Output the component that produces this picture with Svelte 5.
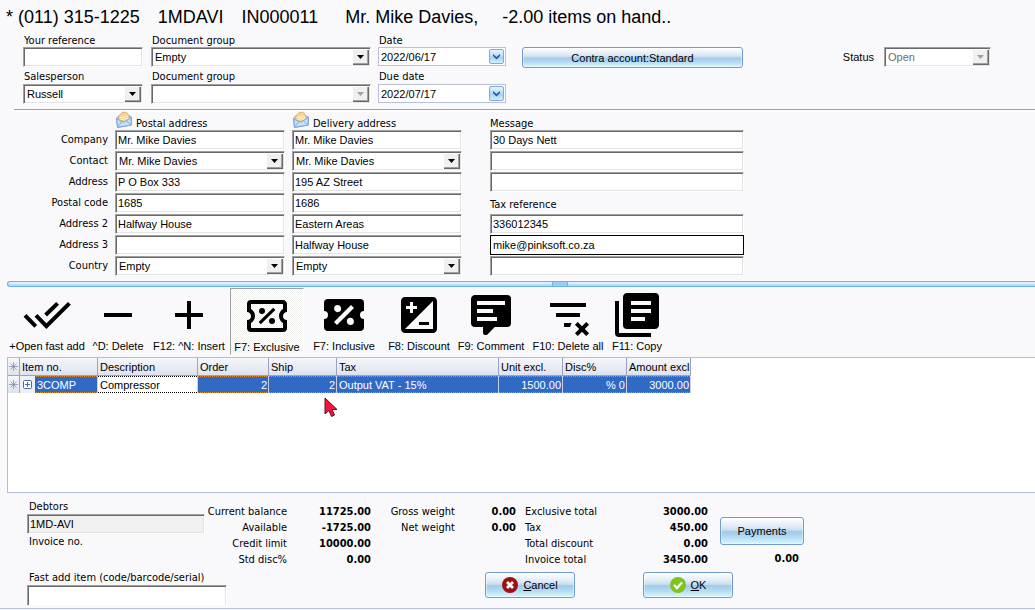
<script>
  const addressRows = [
    { label: 'Company', postal: 'Mr. Mike Davies', delivery: 'Mr. Mike Davies', third: 'Message line 1', value: '30 Days Nett' },
    { label: 'Contact', postal: 'Mr. Mike Davies', delivery: 'Mr. Mike Davies', combo: true, third: 'Message line 2', value: '' },
    { label: 'Address', postal: 'P O Box 333', delivery: '195 AZ Street', third: 'Message line 3', value: '' },
    { label: 'Postal code', postal: '1685', delivery: '1686', heading: 'Tax reference' },
    { label: 'Address 2', postal: 'Halfway House', delivery: 'Eastern Areas', id: 'taxref', third: 'Tax reference', value: '336012345' },
    { label: 'Address 3', postal: '', delivery: 'Halfway House', third: 'E-mail', value: 'mike@pinksoft.co.za', flat: true },
    { label: 'Country', postal: 'Empty', delivery: 'Empty', combo: true, third: 'Extra', value: '' }
  ];

  const tools = [
    { label: '+Open fast add', line: 'M6.5 12.2 11.7 17.6 23.2 6.2M1 12.2 6.4 17.7M11.3 12 17.3 6.2' },
    { label: '^D: Delete', line: 'M5 12H19' },
    { label: 'F12: ^N: Insert', line: 'M5 12H19M12 5V19' },
    { label: 'F7: Exclusive', pressed: true, fill: 'M4 4A2 2 0 0 0 2 6V10C3.11 10 4 10.9 4 12A2 2 0 0 1 2 14V18A2 2 0 0 0 4 20H20A2 2 0 0 0 22 18V14A2 2 0 0 1 20 12C20 10.89 20.9 10 22 10V6C22 4.89 21.1 4 20 4H4M4 6H20V8.54C18.76 9.25 18 10.57 18 12C18 13.43 18.76 14.75 20 15.46V18H4V15.46C5.24 14.75 6 13.43 6 12C6 10.57 5.24 9.25 4 8.54V6M15.1 7.9 16.2 9 8.9 16.1 7.8 15ZM9.5 8A1.5 1.5 0 1 0 9.5 11A1.5 1.5 0 1 0 9.5 8M14.5 13A1.5 1.5 0 1 0 14.5 16A1.5 1.5 0 1 0 14.5 13Z' },
    { label: 'F7: Inclusive', fill: 'M4 4A2 2 0 0 0 2 6V10A2 2 0 0 1 4 12A2 2 0 0 1 2 14V18A2 2 0 0 0 4 20H20A2 2 0 0 0 22 18V14A2 2 0 0 1 20 12A2 2 0 0 1 22 10V6A2 2 0 0 0 20 4H4M15.5 7L17 8.5L8.5 17L7 15.5L15.5 7M8.81 7.04C9.79 7.04 10.58 7.83 10.58 8.81A1.77 1.77 0 0 1 8.81 10.58C7.83 10.58 7.04 9.79 7.04 8.81A1.77 1.77 0 0 1 8.81 7.04M15.19 13.42C16.17 13.42 16.96 14.21 16.96 15.19A1.77 1.77 0 0 1 15.19 16.96C14.21 16.96 13.42 16.17 13.42 15.19A1.77 1.77 0 0 1 15.19 13.42Z' },
    { label: 'F8: Discount', fill: 'M19 3H5c-1.1 0-2 .9-2 2v14c0 1.1.9 2 2 2h14c1.1 0 2-.9 2-2V5c0-1.1-.9-2-2-2zM5.5 7.5h2v-2H9v2h2V9H9v2H7.5V9h-2V7.5zM19 19H5L19 5v14zm-2-2v-1.5h-5V17h5z' },
    { label: 'F9: Comment', fill: 'M9 22A1 1 0 0 1 8 21V18H4A2 2 0 0 1 2 16V4C2 2.89 2.9 2 4 2H20A2 2 0 0 1 22 4V16A2 2 0 0 1 20 18H13.9L10.2 21.71C10 21.9 9.75 22 9.5 22H9M5 5V7H19V5H5M5 9V11H13V9H5M5 13V15H15V13H5Z' },
    { label: 'F10: Delete all', fill: 'M21 8H3V6H21V8M13.81 16H10V18H13.09C13.21 17.28 13.46 16.61 13.81 16M18 11H6V13H18V11M21.12 15.46L19 17.59L16.88 15.46L15.47 16.88L17.59 19L15.47 21.12L16.88 22.54L19 20.41L21.12 22.54L22.54 21.12L20.41 19L22.54 16.88L21.12 15.46Z' },
    { label: 'F11: Copy', fill: 'M16 15H9V13H16V15M19 11H9V9H19V11M19 7H9V5H19V7M3 5V21H19V23H3A2 2 0 0 1 1 21V5H3M21 1A2 2 0 0 1 23 3V17C23 18.11 22.11 19 21 19H7A2 2 0 0 1 5 17V3C5 1.89 5.89 1 7 1H21' }
  ];

  const account = [
    ['Current balance', '11725.00', 'Gross weight', '0.00', 'Exclusive total', '3000.00'],
    ['Available', '-1725.00', 'Net weight', '0.00', 'Tax', '450.00'],
    ['Credit limit', '10000.00', '', '', 'Total discount', '0.00'],
    ['Std disc%', '0.00', '', '', 'Invoice total', '3450.00']
  ];
</script>

{#snippet combo(id, value, label, disabled)}
  <span class="combo" class:disabled>
    <select {id} aria-label={label} {disabled}><option>{value}</option></select>
    <span class="drop"><svg viewBox="0 0 7 4" width="7" height="4"><path d="M0 0H7L3.5 4Z" /></svg></span>
  </span>
{/snippet}

{#snippet dateBox(id, value)}
  <span class="date">
    <input {id} type="text" {value} />
    <button type="button" aria-label="Choose date">
      <svg viewBox="0 0 9 7" width="9" height="7"><path d="M1 1 4.5 4 8 1V3L4.5 6.5 1 3Z" /></svg>
    </button>
  </span>
{/snippet}

{#snippet envelope()}
  <svg class="mail" viewBox="0 0 16 17" width="16" height="17" aria-hidden="true">
    <path d="M.5 7 7 1.5 15.5 6V14L1.5 16.5Z" fill="#b9cdf0" stroke="#8d9fd8" />
    <path d="M3 4.5Q7 -.5 11.5 2L13.5 8 8 11 2.5 8.5Z" fill="#fbd586" stroke="#dcae78" stroke-width=".8" />
    <path d="M4 6.5 12 5.2M4.5 8.5 12.5 7.2" stroke="#fff3d0" />
    <path d="M.8 8 8 11.2 15.2 6.5V14L1.5 16.3Z" fill="#bfe3fb" stroke="#8d9fd8" />
    <path d="M1.5 16 6 10.5M15 14 10.5 10" stroke="#7fb0e6" fill="none" />
  </svg>
{/snippet}

<main>
  <h1><span>* (011) 315-1225</span><span>1MDAVI</span><span>IN000011</span><span class="name">Mr. Mike Davies,</span><span>-2.00 items on hand..</span></h1>

  <form class="head" onsubmit={(e) => e.preventDefault()}>
    <div class="stack c1">
      <label for="ref">Your reference</label>
      <input id="ref" class="box" type="text" />
      <label for="sales">Salesperson</label>
      {@render combo('sales', 'Russell')}
    </div>
    <div class="stack c2">
      <label for="group1">Document group</label>
      {@render combo('group1', 'Empty')}
      <label for="group2">Document group</label>
      {@render combo('group2', '', undefined, true)}
    </div>
    <div class="stack c3">
      <label for="date">Date</label>
      {@render dateBox('date', '2022/06/17')}
      <label for="due">Due date</label>
      {@render dateBox('due', '2022/07/17')}
    </div>
    <button type="button" class="glass contra">Contra account:Standard</button>
    <div class="status">
      <label for="status">Status</label>
      {@render combo('status', 'Open', undefined, true)}
    </div>
  </form>

  <section class="addresses">
    <span></span>
    <h2>{@render envelope()}Postal address</h2>
    <h2>{@render envelope()}Delivery address</h2>
    <h2 class="message">Message</h2>
    {#each addressRows as row, i}
      <label class="side" for={'postal' + i}>{row.label}</label>
      {#if row.combo}
        {@render combo('postal' + i, row.postal)}
        {@render combo('delivery' + i, row.delivery, 'Delivery ' + row.label)}
      {:else}
        <input id={'postal' + i} class="box" type="text" value={row.postal} />
        <input class="box" type="text" aria-label={'Delivery ' + row.label} value={row.delivery} />
      {/if}
      {#if row.heading}
        <label class="message heading" for="taxref">{row.heading}</label>
      {:else}
        <input id={row.id} class="box message" class:flat={row.flat} type="text" aria-label={row.third} value={row.value} />
      {/if}
    {/each}
  </section>

  <div class="splitter"><i></i></div>

  <nav class="tools">
    {#each tools as t}
      <button type="button" class:pressed={t.pressed}>
        <svg viewBox="0 0 24 24" width="48" height="48" aria-hidden="true">
          {#if t.fill}
            <path d={t.fill} fill-rule="evenodd" />
          {:else}
            <path d={t.line} fill="none" stroke="#000" stroke-width="2" />
          {/if}
        </svg>
        <span>{t.label}</span>
      </button>
    {/each}
  </nav>

  <div class="lines">
    <table>
      <colgroup>
        <col class="w-mark" /><col class="w-item" /><col class="w-desc" /><col class="w-order" /><col class="w-ship" />
        <col class="w-tax" /><col class="w-unit" /><col class="w-unit" /><col class="w-unit" />
      </colgroup>
      <thead>
        <tr>
          <th class="mark"><svg viewBox="0 0 9 9" width="9" height="9"><path d="M4.5 0V9M0 4.5H9M1.5 1.5 7.5 7.5M7.5 1.5 1.5 7.5" /></svg></th>
          <th>Item no.</th><th>Description</th><th>Order</th><th>Ship</th><th>Tax</th><th>Unit excl.</th><th>Disc%</th><th>Amount excl</th>
        </tr>
      </thead>
      <tbody>
        <tr>
          <td class="mark"><svg viewBox="0 0 9 9" width="9" height="9"><path d="M4.5 0V9M0 4.5H9M1.5 1.5 7.5 7.5M7.5 1.5 1.5 7.5" /></svg></td>
          <td class="item">
            <div>
              <button type="button" aria-label="Expand row"><svg viewBox="0 0 9 9" width="9" height="9"><rect x=".5" y=".5" width="8" height="8" rx="1" fill="#fff" /><path d="M2 4.5H7M4.5 2V7" /></svg></button>
              <span>3COMP</span>
            </div>
          </td>
          <td class="edit">Compressor</td>
          <td class="num">2</td><td class="num">2</td><td>Output VAT - 15%</td><td class="num">1500.00</td><td class="num">% 0</td><td class="num">3000.00</td>
        </tr>
      </tbody>
    </table>
    <svg class="pointer" viewBox="0 0 14 21" width="14" height="21" aria-hidden="true">
      <path d="M1 1V17L5 13.5 7.5 19.5 10.5 18 8 12.5H13Z" fill="#f8123c" stroke="#5b1020" />
    </svg>
  </div>

  <footer>
    <div class="debtor">
      <label for="debtor">Debtors</label>
      <input id="debtor" class="box grey" type="text" value="1MD-AVI" readonly />
      <p>Invoice no.</p>
      <label for="fast">Fast add item (code/barcode/serial)</label>
      <input id="fast" class="box fast" type="text" />
    </div>
    <div class="figures">
      <dl>
        {#each account as r}
          <dt class="right">{r[0]}</dt><dd>{r[1]}</dd>
          <dt class="right">{r[2]}</dt><dd>{r[3]}</dd>
          <dt class="total">{r[4]}</dt><dd>{r[5]}</dd>
        {/each}
      </dl>
      <div class="actions">
        <button type="button" class="glass">
          <svg viewBox="0 0 16 16" width="16" height="16" aria-hidden="true"><circle cx="8" cy="8" r="8" fill="#9c1111" /><path d="M5 5 11 11M11 5 5 11" stroke="#fff" stroke-width="2.8" /></svg>
          <span><u>C</u>ancel</span>
        </button>
        <button type="button" class="glass">
          <svg viewBox="0 0 16 16" width="16" height="16" aria-hidden="true"><circle cx="8" cy="8" r="8" fill="#7fc31c" /><path d="M4 8 7 11 12 5.5" stroke="#fff" stroke-width="2.4" fill="none" /></svg>
          <span><u>O</u>K</span>
        </button>
      </div>
    </div>
    <div class="pay">
      <button type="button" class="glass">Payments</button>
      <b>0.00</b>
    </div>
  </footer>
</main>

<style>
  :global(body) { margin: 0; background: #f9f9fc; }
  main {
    --tahoma: Tahoma, "DejaVu Sans Condensed", "Open Sans", sans-serif;
    --ms: "Liberation Sans", Arial, sans-serif;
    font: 11px/14px var(--tahoma);
    color: #000;
    border-bottom: 1px solid #b9c1da;
    overflow: hidden;
  }
  main :is(input, select, button) {
    font: 11px/14px var(--ms);
    color: #000;
    margin: 0;
    padding: 0;
    border: 0;
    border-radius: 0;
    box-sizing: border-box;
    min-width: 0;
    outline: 0;
  }
  h1, h2, p, dl, dd { margin: 0; font-weight: 400; }
  h1 {
    display: flex;
    gap: 18px;
    padding: 5px 6px 4px;
    font: 18px/24px var(--ms);
    white-space: nowrap;
  }
  .name { margin: 0 6px 0 9px; }

  main .box, .combo {
    height: 20px;
    width: 100%;
    background: #fff;
    border: 1px solid;
    border-color: #a0a0a0 #fff #fff #a0a0a0;
    box-shadow: inset 1px 1px #696969, inset -1px -1px #e3e3e3;
    box-sizing: border-box;
  }
  main .box { padding: 0 2px; }
  .combo { display: flex; padding: 1px; }
  .combo select { flex: 1; appearance: none; background: none; padding: 0 2px; height: 16px; opacity: 1; }
  .drop {
    flex: none;
    width: 17px;
    display: grid;
    place-items: center;
    background: #f0f0f0;
    box-shadow: inset 1px 1px #fff, inset -1px -1px #696969, inset -2px -2px #a0a0a0;
    pointer-events: none;
  }
  .disabled .drop { fill: #a0a0a0; }
  .disabled select { color: #6d6d6d; }
  .date {
    display: flex;
    height: 19px;
    padding: 1px;
    background: #fff;
    border: 1px solid #b9c1dd;
    box-sizing: border-box;
  }
  .date input { flex: 1; width: 0; padding: 0 1px; background: none; }
  .date button {
    display: grid;
    place-items: center;
    flex: none;
    width: 15px;
    height: 15px;
    border: 1px solid #7fa9d8;
    border-radius: 2px;
    background: linear-gradient(#e9f4fd, #a9d3f3 60%, #d3f0fd);
  }
  .date svg { fill: #245da8; }
  .glass {
    display: flex;
    align-items: center;
    justify-content: center;
    gap: 5px;
  }
  main .glass {
    border: 1px solid #6f9bce;
    border-radius: 3px;
    background: linear-gradient(#fff, #dde9f5 35%, #c4dcf0 48%, #a3cae8 52%, #b4dcf2 75%, #d8f8fe);
    box-shadow: inset 0 0 0 1px #ffffff66;
  }

  .head {
    display: flex;
    align-items: flex-start;
    padding: 0 44px 5px 9px;
    margin-left: 14px;
    border-bottom: 1px solid #a0a0a0;
    box-shadow: 0 1px #fff;
  }
  .stack { display: grid; grid-template: 14px 20px 17px 20px / 100%; flex: none; }
  .stack label { padding: 1px 0 0 1px; }
  .stack label:nth-of-type(2) { padding-top: 3px; }
  .c1 { width: 120px; margin-right: 8px; }
  .c2 { width: 220px; margin-right: 7px; }
  .c3 { width: 128px; margin-right: 16px; }
  main .contra { width: 221px; height: 21px; margin-top: 14px; }
  .status { display: flex; align-items: center; gap: 10px; margin: 14px 0 0 auto; font-family: var(--ms); }
  .status .combo { width: 107px; }

  .addresses {
    display: grid;
    grid-template-columns: 108px 170px 170px 275px;
    grid-template-rows: 19px;
    grid-auto-rows: 20px;
    gap: 1px 7px;
    align-items: center;
  }
  h2 { display: flex; gap: 4px; font-size: 11px; line-height: 10px; align-items: flex-end; align-self: end; }
  h2 .mail { margin: 0 0 1px 1px; }
  .side { text-align: right; }
  .message { margin-left: 21px; }
  .heading { padding-top: 4px; }
  main .box.message { width: 254px; }
  main .box.flat { border-color: #000; box-shadow: none; }

  .splitter {
    height: 4px;
    margin: 5px 0 1px 7px;
    border: 1px solid #6db2e6;
    border-right: 0;
    border-radius: 3px 0 0 3px;
    background: linear-gradient(#dff0fc 50%, #b9dcf6 50%);
  }
  .splitter i { display: block; width: 14px; height: 4px; margin-left: 53%; background: #9ccbf6; border: 0 solid #6db2e6; border-width: 0 1px; }

  .tools {
    display: grid;
    grid-template-columns: 82px 60px 82px 74px 80px 70px 74px 80px 58px;
    padding-left: 6px;
  }
  .tools button {
    display: flex;
    flex-direction: column;
    align-items: center;
    height: 67px;
    padding-top: 3px;
    background: none;
    white-space: nowrap;
  }
  .tools .pressed {
    border: 1px solid;
    border-color: #a0a0a0 #fff #fff #a0a0a0;
    background: repeating-conic-gradient(#fff 0 25%, #f2f2f0 0 50%) 0 0 / 2px 2px;
  }

  .lines {
    position: relative;
    height: 134px;
    margin: 2px 0 0 7px;
    background: #fff;
    border: 1px solid #b5bcd6;
    border-right: 0;
    font-family: var(--ms);
  }
  table { border-collapse: separate; border-spacing: 0; table-layout: fixed; width: 683px; font-size: 11px; }
  .w-mark { width: 12px; } .w-item { width: 78px; } .w-desc { width: 100px; } .w-order { width: 71px; }
  .w-ship { width: 68px; } .w-tax { width: 162px; } .w-unit { width: 64px; }
  th {
    height: 17px;
    padding: 0 2px;
    border-right: 1px solid #9aa3c4;
    border-bottom: 1px solid #9aa3c4;
    background: linear-gradient(#f6f7fb, #dfe2ee);
    font-weight: 400;
    text-align: left;
    white-space: nowrap;
  }
  td {
    --dot: #e08a2c;
    --fill: #316ac5;
    height: 17px;
    padding: 0 2px;
    border-right: 1px solid #c8cde0;
    background:
      linear-gradient(90deg, var(--dot) 1px, var(--fill) 1px) 0 0 / 2px 1px repeat-x,
      linear-gradient(90deg, var(--dot) 1px, var(--fill) 1px) 0 100% / 2px 1px repeat-x,
      var(--fill);
    color: #fff;
    white-space: nowrap;
  }
  .num { text-align: right; padding-right: 1px; }
  .edit { --dot: #000; --fill: #fff; color: #000; }
  .mark { padding: 0; background: linear-gradient(#f6f7fb, #dfe2ee); text-align: center; border-right: 1px solid #9aa3c4; }
  .mark svg { display: block; margin: 0 auto; stroke: #6473a6; stroke-width: .6; }
  .item { padding: 0; }
  .item div { display: flex; align-items: center; }
  .item button { display: grid; place-items: center; width: 15px; height: 17px; background: #eef0f7; }
  .item button svg { stroke: #4a67b0; fill: none; }
  .item span { padding-left: 2px; }
  .pointer { position: absolute; left: 316px; top: 39px; }

  footer { display: flex; align-items: flex-start; padding: 7px 0 3px 27px; }
  .debtor { width: 200px; display: flex; flex-direction: column; flex: none; }
  .debtor label, .debtor p { padding-left: 2px; }
  main .box.grey { width: 178px; background: #f0f0f0; }
  .debtor p { padding-top: 1px; margin-bottom: 22px; }
  main .box.fast { border-bottom: 0; box-shadow: inset 1px 1px #696969, inset -1px 0 #e3e3e3; }
  .figures { flex: none; width: 501px; margin: 5px 12px 0 -20px; }
  dl {
    display: grid;
    grid-template-columns: 80px 84px 84px 61px 100px 92px;
    grid-auto-rows: 16px;
    white-space: nowrap;
  }
  .right { text-align: right; }
  .total { padding-left: 9px; }
  dd, b { text-align: right; font-weight: 700; }
  .actions { display: flex; gap: 68px; margin: 3px 0 0 278px; }
  .actions .glass { flex: none; width: 90px; height: 26px; }
  .pay { display: grid; width: 84px; gap: 7px; padding-top: 17px; }
  .pay .glass { height: 28px; }
  .pay b { padding-right: 5px; }
</style>
